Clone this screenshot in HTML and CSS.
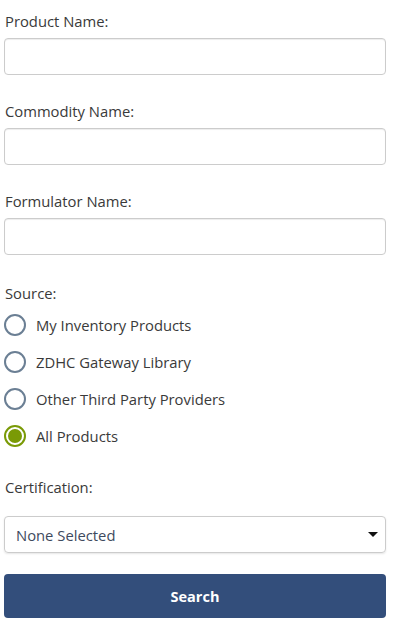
FILE: index.html
```html
<!DOCTYPE html>
<html>
<head>
<meta charset="utf-8">
<link rel="stylesheet" href="styles.css">
</head>
<body>
<form class="form">
  <div class="field">
    <label class="label">Product Name:</label>
    <input class="input" type="text">
  </div>
  <div class="field">
    <label class="label">Commodity Name:</label>
    <input class="input" type="text">
  </div>
  <div class="field">
    <label class="label">Formulator Name:</label>
    <input class="input" type="text">
  </div>
  <div class="field source">
    <div class="label">Source:</div>
    <div class="radios">
      <label class="radio"><span class="circle"></span><span>My Inventory Products</span></label>
      <label class="radio"><span class="circle"></span><span>ZDHC Gateway Library</span></label>
      <label class="radio"><span class="circle"></span><span>Other Third Party Providers</span></label>
      <label class="radio"><span class="circle checked"></span><span>All Products</span></label>
    </div>
  </div>
  <div class="field cert">
    <div class="label">Certification:</div>
    <div class="select"><span>None Selected</span><span class="caret"></span></div>
  </div>
  <button class="btn" type="button">Search</button>
</form>
</body>
</html>
```
FILE: styles.css
```css
html, body { margin: 0; padding: 0; background: #fff; }
body { font-family: "Open Sans", "Segoe UI", sans-serif; font-size: 14.8px; color: #3a3a3a; }
.form { padding: 11px 9px 0 4px; display: flex; flex-direction: column; }
.field { display: flex; flex-direction: column; margin-bottom: 26px; }
.label { display: block; line-height: 20px; margin: 0 0 7px 1px; }
.input {
  height: 37px; box-sizing: border-box; border: 1px solid #ccc; border-radius: 4px;
  box-shadow: inset 0 1px 1px rgba(0,0,0,0.075); margin: 0; font: inherit; padding: 0 8px;
}
.source { margin-top: 2px; }
.source .label { margin-bottom: 11px; }
.radios { display: flex; flex-direction: column; gap: 15px; }
.radio { display: flex; align-items: center; gap: 10px; line-height: 22px; }
.circle {
  width: 22px; height: 22px; box-sizing: border-box; border-radius: 50%;
  border: 2px solid #6b7f94; background: #fff; flex: none;
}
.circle.checked { border-color: #7a9a06; position: relative; }
.circle.checked::after {
  content: ""; position: absolute; left: 2px; top: 2px; width: 14px; height: 14px;
  border-radius: 50%; background: #7a9a06;
}
.cert { margin-top: 4px; margin-bottom: 21px; }
.cert .label { margin-bottom: 19px; }
.select {
  height: 37px; box-sizing: border-box; border: 1px solid #ccc; border-radius: 4px;
  box-shadow: 0 1px 2px rgba(0,0,0,0.1); display: flex; align-items: center;
  justify-content: space-between; padding: 0 7px 0 11px; color: #3e4a5e;
}
.caret {
  width: 0; height: 0; border-left: 5px solid transparent; border-right: 5px solid transparent;
  border-top: 5px solid #111;
}
.btn {
  height: 44px; border: none; border-radius: 4px; background: #334e7b; color: #fff;
  font-family: "Open Sans", sans-serif; font-weight: 700; font-size: 14.5px; margin: 0;
}
```
